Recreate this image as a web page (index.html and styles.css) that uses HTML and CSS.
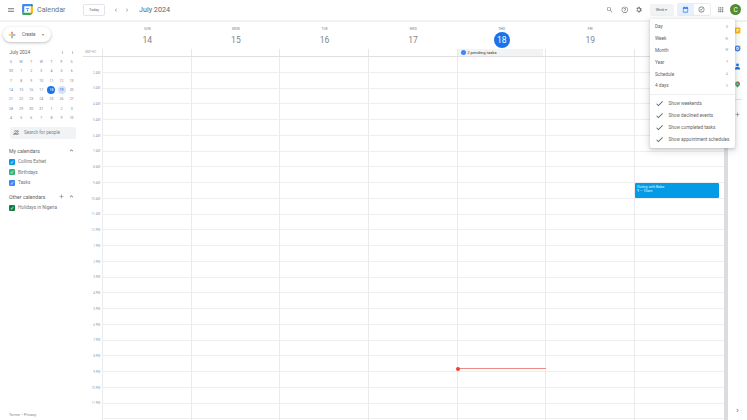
FILE: index.html
```html
<!DOCTYPE html>
<html lang="en">
<head>
    <meta charset="UTF-8">
    <title>Calendar - Week of July 14, 2024</title>
    <link rel="stylesheet" href="styles.css">
</head>
<body>

    <!-- Top bar -->
    <header class="topbar">
        <div class="top-left">
            <svg class="menu-icon" viewBox="0 0 24 24"><path d="M3 18h18v-2H3v2zm0-5h18v-2H3v2zm0-7v2h18V6H3z"/></svg>
            <svg class="logo" viewBox="0 0 24 24">
                <path fill="#fff" d="M6 6h12v12H6z"/>
                <path fill="#4285f4" d="M2 4.5A2.5 2.5 0 0 1 4.5 2H18v4H6v12H2z"/>
                <path fill="#fbbc04" d="M18 6h4v12h-4z"/>
                <path fill="#1a73e8" d="M18 2h1.5A2.5 2.5 0 0 1 22 4.5V6h-4z"/>
                <path fill="#34a853" d="M6 18h12v4H4.500A2.500 2.500 0 0 1 2 19.500V18z"/>
                <path fill="#ea4335" d="M18 18h4l-4 4z"/>
                <path fill="#4285f4" d="M9 9h6v1.5H9zM11 12h2v3h-2z"/>
            </svg>
            <span class="app-name">Calendar</span>
        </div>
        <button class="today-btn">Today</button>
        <div class="nav-arrows">
            <svg viewBox="0 0 24 24"><path d="M15.4 7.400 14 6l-6 6 6 6 1.400-1.400L10.800 12z"/></svg>
            <svg viewBox="0 0 24 24"><path d="M8.600 16.600 10 18l6-6-6-6-1.400 1.400L13.200 12z"/></svg>
        </div>
        <span class="current-month">July 2024</span>

        <div class="top-right">
            <svg class="top-icon" viewBox="0 0 24 24"><path d="M15.5 14h-.79l-.28-.27A6.471 6.471 0 0 0 16 9.5 6.5 6.5 0 1 0 9.500 16c1.610 0 3.090-.59 4.230-1.570l.27.28v.79l5 4.990L20.490 19l-4.990-5zm-6 0C7.010 14 5 11.990 5 9.500S7.010 5 9.500 5 14 7.010 14 9.500 11.990 14 9.500 14z"/></svg>
            <svg class="top-icon" viewBox="0 0 24 24"><path d="M12 2a10 10 0 1 0 0 20 10 10 0 0 0 0-20zm0 18a8 8 0 1 1 0-16 8 8 0 0 1 0 16zm-1-3h2v-2h-2zm1-11a4 4 0 0 0-4 4h2a2 2 0 1 1 4 0c0 2-3 1.800-3 5h2c0-2.300 3-2.500 3-5a4 4 0 0 0-4-4z"/></svg>
            <svg class="top-icon" viewBox="0 0 24 24"><path d="M19.400 13a7.500 7.500 0 0 0 0-2l2.100-1.600-2-3.500-2.500 1a7.500 7.500 0 0 0-1.700-1L15 2.300h-4l-.4 2.600a7.500 7.500 0 0 0-1.700 1l-2.400-1-2 3.500L6.600 11a7.500 7.500 0 0 0 0 2l-2.100 1.600 2 3.500 2.500-1a7.500 7.500 0 0 0 1.700 1l.3 2.600h4l.4-2.600a7.500 7.500 0 0 0 1.700-1l2.400 1 2-3.500zM12 16a4 4 0 1 1 0-8 4 4 0 0 1 0 8z"/></svg>
            <button class="view-btn">Week <span class="caret">&#9662;</span></button>
            <div class="toggle">
                <span class="toggle-item active">
                    <svg viewBox="0 0 24 24"><path d="M19 4h-1V2h-2v2H8V2H6v2H5a2 2 0 0 0-2 2v14a2 2 0 0 0 2 2h14a2 2 0 0 0 2-2V6a2 2 0 0 0-2-2zm0 16H5V9h14z"/></svg>
                </span>
                <span class="toggle-item">
                    <svg viewBox="0 0 24 24"><path d="M12 2a10 10 0 1 0 0 20 10 10 0 0 0 0-20zm0 18a8 8 0 1 1 0-16 8 8 0 0 1 0 16zm-1.500-4L7 12.500 8.400 11l2.100 2.100 5-5L17 9.500z"/></svg>
                </span>
            </div>
            <svg class="apps-icon" viewBox="0 0 24 24"><path d="M4 8h4V4H4zm6 12h4v-4h-4zm-6 0h4v-4H4zm0-6h4v-4H4zm6 0h4v-4h-4zm6-10v4h4V4zm-6 4h4V4h-4zm6 6h4v-4h-4zm0 6h4v-4h-4z"/></svg>
            <span class="avatar">C</span>
        </div>
    </header>

    <div class="main">
        <!-- Left sidebar -->
        <aside class="sidebar">
            <button class="create-btn">
                <svg viewBox="0 0 36 36">
                    <path fill="#34a853" d="M16 20h4v10h-4z"/>
                    <path fill="#4285f4" d="M20 16h10v4H20z"/>
                    <path fill="#fbbc05" d="M6 16h10v4H6z"/>
                    <path fill="#ea4335" d="M16 6h4v10h-4z"/>
                    <path fill="#fbbc05" d="M16 16h4v4h-4z"/>
                </svg>
                <span>Create</span>
                <span class="caret">&#9662;</span>
            </button>

            <div class="mini-head">
                <span>July 2024</span>
                <div class="mini-arrows">
                    <svg viewBox="0 0 24 24"><path d="M15.400 7.400 14 6l-6 6 6 6 1.400-1.400L10.800 12z"/></svg>
                    <svg viewBox="0 0 24 24"><path d="M8.600 16.600 10 18l6-6-6-6-1.400 1.400L13.200 12z"/></svg>
                </div>
            </div>
            <div class="mini-cal" id="miniCal"></div>

            <div class="people-search">
                <svg viewBox="0 0 24 24"><path d="M9 12a4 4 0 1 0 0-8 4 4 0 0 0 0 8zm0-6a2 2 0 1 1 0 4 2 2 0 0 1 0-4zm0 8c-2.700 0-8 1.300-8 4v2h16v-2c0-2.700-5.300-4-8-4zm-6 4c.2-.7 3.300-2 6-2s5.800 1.300 6 2zm12.800-5.900c1.800.6 5.200 1.700 5.200 3.900v2h-2v-2c0-1.200-1.800-2.500-3.200-3.900zM15 4a4 4 0 0 1 0 8c-.5 0-.9-.1-1.300-.2a6 6 0 0 0 0-7.600C14.100 4.100 14.500 4 15 4z"/></svg>
                <span>Search for people</span>
            </div>

            <div class="cal-group-head">
                <span>My calendars</span>
                <svg viewBox="0 0 24 24"><path d="m12 8-6 6 1.400 1.400 4.600-4.600 4.600 4.600L18 14z"/></svg>
            </div>
            <div class="cal-item"><span class="check check-blue">&#10003;</span>Collins Eshiet</div>
            <div class="cal-item"><span class="check check-green">&#10003;</span>Birthdays</div>
            <div class="cal-item"><span class="check check-indigo">&#10003;</span>Tasks</div>

            <div class="cal-group-head other">
                <span>Other calendars</span>
                <svg class="plus" viewBox="0 0 24 24"><path d="M19 13h-6v6h-2v-6H5v-2h6V5h2v6h6z"/></svg>
                <svg viewBox="0 0 24 24"><path d="m12 8-6 6 1.400 1.400 4.600-4.600 4.600 4.600L18 14z"/></svg>
            </div>
            <div class="cal-item"><span class="check check-dark">&#10003;</span>Holidays in Nigeria</div>

            <div class="terms">Terms &ndash; Privacy</div>
        </aside>

        <!-- Week view -->
        <section class="week">
            <div class="week-head">
                <div class="day-head"><span class="dow">SUN</span><span class="dnum">14</span></div>
                <div class="day-head"><span class="dow">MON</span><span class="dnum">15</span></div>
                <div class="day-head"><span class="dow">TUE</span><span class="dnum">16</span></div>
                <div class="day-head"><span class="dow">WED</span><span class="dnum">17</span></div>
                <div class="day-head today"><span class="dow">THU</span><span class="dnum">18</span></div>
                <div class="day-head"><span class="dow">FRI</span><span class="dnum">19</span></div>
                <div class="day-head"><span class="dow">SAT</span><span class="dnum">20</span></div>
            </div>
            <div class="allday">
                <div class="gmt">GMT+01</div>
                <div class="allday-cell"></div>
                <div class="allday-cell"></div>
                <div class="allday-cell"></div>
                <div class="allday-cell"></div>
                <div class="allday-cell"><div class="pending"><span class="dot"></span>2 pending tasks</div></div>
                <div class="allday-cell"></div>
                <div class="allday-cell"></div>
            </div>
            <div class="grid" id="grid">
                <div class="times" id="times"></div>
                <div class="columns" id="columns"></div>
                <div class="event">
                    <div>Outing with Baba</div>
                    <div>9 &ndash; 10am</div>
                </div>
                <div class="now-line"></div>
            </div>
        </section>

        <!-- Right strip -->
        <aside class="side-strip">
            <svg viewBox="0 0 24 24"><path fill="#fbbc04" d="M5 2h14a3 3 0 0 1 3 3v14a3 3 0 0 1-3 3H5a3 3 0 0 1-3-3V5a3 3 0 0 1 3-3z"/><path fill="#fff" d="M7 7h10v2H7zm0 4h10v2H7zm0 4h7v2H7z"/></svg>
            <svg viewBox="0 0 24 24"><circle cx="12" cy="12" r="10" fill="#4285f4"/><circle cx="12" cy="12" r="5" fill="#fff"/><path fill="#fbbc04" d="M17 2h5v5z"/><path fill="#4285f4" d="m11 15-3-3 1.400-1.400L11 12.200l3.600-3.600L16 10z"/></svg>
            <svg viewBox="0 0 24 24"><circle cx="12" cy="7" r="5" fill="#1a73e8"/><path fill="#1a73e8" d="M3 22c0-6 4-8 9-8s9 2 9 8z"/></svg>
            <svg viewBox="0 0 24 24"><path fill="#34a853" d="M12 2a8 8 0 0 0-8 8c0 5 8 12 8 12s8-7 8-12a8 8 0 0 0-8-8z"/><path fill="#ea4335" d="M12 2a8 8 0 0 1 6.500 3.400L12 12z"/><path fill="#4285f4" d="M18.500 5.400A8 8 0 0 1 20 10c0 2-1.200 4-2.500 6L12 12z"/><circle cx="12" cy="10" r="3" fill="#fbbc04"/></svg>
            <div class="strip-sep"></div>
            <svg class="strip-plus" viewBox="0 0 24 24"><path d="M19 13h-6v6h-2v-6H5v-2h6V5h2v6h6z"/></svg>
            <svg class="strip-more" viewBox="0 0 24 24"><path d="M8.600 16.600 10 18l6-6-6-6-1.400 1.400L13.200 12z"/></svg>
        </aside>
    </div>

    <!-- View dropdown -->
    <div class="view-menu">
        <div class="menu-row"><span>Day</span><span class="key">D</span></div>
        <div class="menu-row"><span>Week</span><span class="key">W</span></div>
        <div class="menu-row"><span>Month</span><span class="key">M</span></div>
        <div class="menu-row"><span>Year</span><span class="key">Y</span></div>
        <div class="menu-row"><span>Schedule</span><span class="key">A</span></div>
        <div class="menu-row"><span>4 days</span><span class="key">X</span></div>
        <div class="menu-sep"></div>
        <div class="menu-check"><svg viewBox="0 0 24 24"><path d="M9 16.200 4.800 12l-1.400 1.400L9 19 21 7l-1.400-1.400z"/></svg>Show weekends</div>
        <div class="menu-check"><svg viewBox="0 0 24 24"><path d="M9 16.200 4.800 12l-1.400 1.400L9 19 21 7l-1.400-1.400z"/></svg>Show declined events</div>
        <div class="menu-check"><svg viewBox="0 0 24 24"><path d="M9 16.200 4.800 12l-1.400 1.400L9 19 21 7l-1.400-1.400z"/></svg>Show completed tasks</div>
        <div class="menu-check"><svg viewBox="0 0 24 24"><path d="M9 16.200 4.800 12l-1.400 1.400L9 19 21 7l-1.400-1.400z"/></svg>Show appointment schedules</div>
    </div>

    <script>
        // Mini calendar
        var names = ["S", "M", "T", "W", "T", "F", "S"];
        var days = [30, 1, 2, 3, 4, 5, 6, 7, 8, 9, 10, 11, 12, 13, 14, 15, 16, 17, 18, 19, 20,
                    21, 22, 23, 24, 25, 26, 27, 28, 29, 30, 31, 1, 2, 3, 4, 5, 6, 7, 8, 9, 10];
        var cal = document.getElementById("miniCal");
        names.forEach(function(n) {
            cal.innerHTML += '<span class="mini-name">' + n + '</span>';
        });
        days.forEach(function(d, i) {
            var cls = "mini-day";
            if (i === 18) cls += " is-today";
            if (i === 19) cls += " is-picked";
            cal.innerHTML += '<span class="' + cls + '">' + d + '</span>';
        });

        // Hour labels and lines
        var times = document.getElementById("times");
        var labels = ["2 AM", "3 AM", "4 AM", "5 AM", "6 AM", "7 AM", "8 AM", "9 AM", "10 AM", "11 AM", "12 PM",
                      "1 PM", "2 PM", "3 PM", "4 PM", "5 PM", "6 PM", "7 PM", "8 PM", "9 PM", "10 PM", "11 PM"];
        labels.forEach(function(t) {
            times.innerHTML += '<div class="time-label">' + t + '</div>';
        });
        var columns = document.getElementById("columns");
        for (var c = 0; c < 7; c++) {
            var html = '<div class="day-col">';
            for (var h = 0; h < 24; h++) html += '<div class="hour"></div>';
            columns.innerHTML += html + '</div>';
        }
    </script>

</body>
</html>
```

FILE: styles.css
```css
* {
    margin: 0;
    padding: 0;
    box-sizing: border-box;
}

body {
    width: 747px;
    height: 420px;
    overflow: hidden;
    background: white;
    font-family: Roboto, "Liberation Sans", sans-serif;
    color: #5f6368;
    display: flex;
    flex-direction: column;
    position: relative;
}

svg {
    fill: #70757a;
    display: block;
}

button {
    font-family: inherit;
    background: white;
    border: none;
    color: #5f6368;
}

.caret {
    font-size: 4px;
    color: #80868b;
}

/* Top bar */
.topbar {
    height: 22px;
    flex-shrink: 0;
    display: flex;
    align-items: center;
    padding-bottom: 1px;
    border-bottom: 2px solid #f1f1f1;
}

.top-left {
    width: 83px;
    display: flex;
    align-items: center;
    padding-left: 7px;
}

.menu-icon {
    width: 8px;
    height: 8px;
}

.logo {
    width: 13px;
    height: 13px;
    margin-left: 6px;
}

.app-name {
    margin-left: 3px;
    font-size: 7.2px;
    color: #70757a;
}

.today-btn {
    width: 22px;
    height: 12px;
    font-size: 3.6px;
    border: 1px solid #e3e4e6;
    border-radius: 2px;
}

.nav-arrows {
    display: flex;
    gap: 5px;
    margin-left: 8px;
}

.nav-arrows svg {
    width: 6px;
    height: 6px;
}

.current-month {
    margin-left: 9px;
    font-size: 7.2px;
}

.top-right {
    margin-left: auto;
    display: flex;
    align-items: center;
    padding-right: 6px;
}

.top-icon {
    width: 7.5px;
    height: 7.5px;
    margin-right: 7px;
}

.view-btn {
    width: 24px;
    height: 12px;
    font-size: 3.6px;
    background: #f1f3f4;
    border-radius: 2px;
}

.toggle {
    display: flex;
    margin-left: 3px;
    height: 13px;
    border: 1px solid #eceded;
    border-radius: 2px;
}

.toggle-item {
    width: 16px;
    display: flex;
    align-items: center;
    justify-content: center;
}

.toggle-item svg {
    width: 7px;
    height: 7px;
}

.toggle-item.active {
    background: #e8f0fe;
}

.toggle-item.active svg {
    fill: #1a73e8;
}

.apps-icon {
    width: 7.5px;
    height: 7.5px;
    margin-left: 6px;
}

.avatar {
    width: 11px;
    height: 11px;
    margin-left: 6px;
    border-radius: 50%;
    background: #558b2f;
    color: white;
    font-size: 6.5px;
    display: flex;
    align-items: center;
    justify-content: center;
}

.main {
    flex: 1;
    display: flex;
    min-height: 0;
}

/* Sidebar */
.sidebar {
    width: 83px;
    flex-shrink: 0;
    padding-left: 3px;
    position: relative;
}

.create-btn {
    margin-top: 5px;
    width: 48px;
    height: 15px;
    border-radius: 8px;
    box-shadow: 0 1px 2px rgba(60, 64, 67, .2), 0 1px 3px 1px rgba(60, 64, 67, .1);
    display: flex;
    align-items: center;
    gap: 5px;
    padding-left: 4px;
    font-size: 4.6px;
}

.create-btn svg {
    width: 10px;
    height: 10px;
}

.create-btn .caret {
    margin-left: 2px;
}

.mini-head {
    margin: 7.5px 0 0 6.5px;
    width: 65.5px;
    height: 6px;
    display: flex;
    align-items: center;
    justify-content: space-between;
    font-size: 4.8px;
}

.mini-arrows {
    display: flex;
    gap: 5px;
}

.mini-arrows svg {
    width: 5px;
    height: 5px;
}

.mini-cal {
    width: 71px;
    margin: 2px 0 0 3px;
    display: grid;
    grid-template-columns: repeat(7, 10.1px);
    grid-auto-rows: 9.33px;
    font-size: 3.5px;
    color: #80868b;
}

.mini-name,
.mini-day {
    display: flex;
    align-items: center;
    justify-content: center;
}

.is-today,
.is-picked {
    width: 8px;
    height: 8px;
    border-radius: 50%;
    justify-self: center;
    align-self: center;
}

.is-today {
    background: #1a73e8;
    color: white;
}

.is-picked {
    background: #d2e3fc;
    color: #185abc;
}

.people-search {
    margin: 4px 0 0 7px;
    width: 66px;
    height: 12px;
    background: #f1f3f4;
    border-radius: 2px;
    display: flex;
    align-items: center;
    gap: 4px;
    padding-left: 3px;
    font-size: 4.6px;
    color: #80868b;
}

.people-search svg {
    width: 7px;
    height: 7px;
}

.cal-group-head {
    margin: 7px 0 1px 6px;
    width: 65.5px;
    height: 10px;
    display: flex;
    align-items: center;
    font-size: 5.2px;
}

.cal-group-head.other {
    margin-top: 4px;
}

.cal-group-head span {
    margin-right: auto;
}

.cal-group-head svg {
    width: 7px;
    height: 7px;
}

.cal-group-head .plus {
    margin-right: 3px;
}

.cal-item {
    height: 10.3px;
    margin-left: 6px;
    display: flex;
    align-items: center;
    gap: 3px;
    font-size: 4.7px;
    color: #70757a;
}

.check {
    width: 6px;
    height: 6px;
    border-radius: 1px;
    color: white;
    font-size: 5px;
    line-height: 6px;
    text-align: center;
}

.check-blue { background: #039be5; }
.check-green { background: #33b679; }
.check-indigo { background: #4285f4; }
.check-dark { background: #0b8043; }

.terms {
    position: absolute;
    left: 6px;
    bottom: 3px;
    margin-left: 3px;
    font-size: 3.8px;
    color: #80868b;
}

/* Week view */
.week {
    width: 645px;
    flex-shrink: 0;
    display: flex;
    flex-direction: column;
    min-height: 0;
}

.week-head {
    height: 27px;
    padding-left: 20px;
    padding-top: 5px;
    display: grid;
    grid-template-columns: repeat(7, 88.6px);
}

.day-head {
    display: flex;
    flex-direction: column;
    align-items: center;
}

.dow {
    font-size: 3.4px;
    line-height: 5px;
    color: #80868b;
}

.dnum {
    width: 16px;
    height: 16px;
    border-radius: 50%;
    font-size: 8.5px;
    line-height: 16px;
    text-align: center;
    color: #80868b;
}

.today .dow {
    color: #1a73e8;
}

.today .dnum {
    background: #1a73e8;
    color: white;
}

.allday {
    height: 8px;
    display: grid;
    grid-template-columns: 19.3px repeat(7, 88.6px);
    border-bottom: 1px solid #e0e0e0;
    margin-right: 4px;
}

.gmt {
    font-size: 3px;
    line-height: 6px;
    color: #9aa0a6;
    padding-left: 2px;
}

.allday-cell {
    border-left: 1px solid #e8e8e8;
}

.pending {
    width: 85px;
    height: 7px;
    background: #f1f3f4;
    display: flex;
    align-items: center;
    gap: 1.5px;
    padding-left: 3px;
    font-size: 4.2px;
    color: #3c4043;
}

.dot {
    width: 5px;
    height: 5px;
    border-radius: 50%;
    background: #4285f4;
}

.grid {
    flex: 1;
    min-height: 0;
    overflow: hidden;
    position: relative;
    display: flex;
    border-right: 4px solid #dadce0;
}

.times {
    width: 19.3px;
    flex-shrink: 0;
    padding-top: 13.7px;
}

.time-label {
    height: 15.75px;
    font-size: 3.1px;
    line-height: 4px;
    padding-right: 2px;
    text-align: right;
    color: #9aa0a6;
}

.columns {
    flex: 1;
    display: grid;
    grid-template-columns: repeat(6, 88.6px) 1fr;
}

.day-col {
    border-left: 1px solid #ebebeb;
}

.hour {
    height: 15.75px;
    border-bottom: 1px solid #eeeeee;
}

.event {
    position: absolute;
    left: 552px;
    top: 126px;
    width: 84px;
    height: 15px;
    background: #039be5;
    color: #e6f5fc;
    font-size: 3.6px;
    line-height: 4.4px;
    padding: 2px 0 0 2px;
    border-radius: 1px;
}

.now-line {
    position: absolute;
    left: 374px;
    top: 311px;
    width: 89px;
    height: 1px;
    background: #ee8a84;
}

.now-line::before {
    content: "";
    position: absolute;
    left: -1.500px;
    top: -1.500px;
    width: 4px;
    height: 4px;
    border-radius: 50%;
    background: #ea4335;
}

/* Right strip */
.side-strip {
    flex: 1;
    display: flex;
    flex-direction: column;
    align-items: center;
    padding-top: 5px;
    gap: 11px;
    position: relative;
}

.side-strip svg {
    width: 7px;
    height: 7px;
}

.strip-sep {
    width: 8px;
    height: 1px;
    background: #e3e4e6;
}

.strip-more {
    position: absolute;
    bottom: 6px;
}

/* View dropdown */
.view-menu {
    position: absolute;
    left: 650px;
    top: 19px;
    width: 85px;
    height: 129px;
    background: white;
    border-radius: 2px;
    box-shadow: 0 1px 3px rgba(60, 64, 67, .25), 0 2px 6px 2px rgba(60, 64, 67, .12);
    padding-top: 2px;
}

.menu-row {
    height: 11.8px;
    padding: 0 7px 0 5px;
    display: flex;
    align-items: center;
    justify-content: space-between;
    font-size: 4.7px;
}

.key {
    font-size: 3px;
    color: #9aa0a6;
}

.menu-sep {
    height: 1px;
    margin: 2px 0 3px;
    background: #eeeeee;
}

.menu-check {
    height: 11.8px;
    display: flex;
    align-items: center;
    padding-left: 4.5px;
    gap: 5px;
    font-size: 4.65px;
}

.menu-check svg {
    width: 9px;
    height: 9px;
    fill: #5f6368;
}
```
